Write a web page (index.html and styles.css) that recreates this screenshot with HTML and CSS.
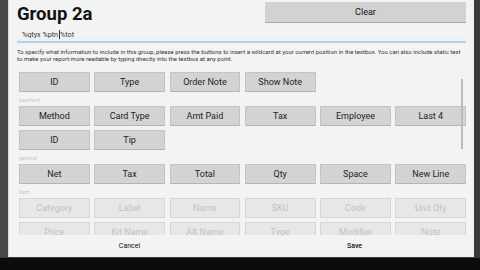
FILE: index.html
```html
<!DOCTYPE html>
<html>
<head>
<meta charset="utf-8">
<link rel="stylesheet" href="styles.css">
</head>
<body>
<div class="screen">
  <div class="dialog">
    <div class="header">
      <h1 class="title">Group 2a</h1>
      <button class="clear">Clear</button>
    </div>
    <div class="textbox"><span>%qtyx %ptn</span><span class="caret"></span><span>%tot</span></div>
    <p class="desc">To specify what information to include in this group, please press the buttons to insert a wildcard at your current position in the textbox. You can also include static text to make your report more readable by typing directly into the textbox at any point.</p>
    <div class="scroll">
      <div class="grid">
        <button class="btn">ID</button>
        <button class="btn">Type</button>
        <button class="btn">Order Note</button>
        <button class="btn">Show Note</button>
      </div>
      <div class="label">payment</div>
      <div class="grid">
        <button class="btn">Method</button>
        <button class="btn">Card Type</button>
        <button class="btn">Amt Paid</button>
        <button class="btn">Tax</button>
        <button class="btn">Employee</button>
        <button class="btn">Last 4</button>
        <button class="btn">ID</button>
        <button class="btn">Tip</button>
      </div>
      <div class="label">general</div>
      <div class="grid">
        <button class="btn">Net</button>
        <button class="btn">Tax</button>
        <button class="btn">Total</button>
        <button class="btn">Qty</button>
        <button class="btn">Space</button>
        <button class="btn">New Line</button>
      </div>
      <div class="label">item</div>
      <div class="grid">
        <button class="btn off">Category</button>
        <button class="btn off">Label</button>
        <button class="btn off">Name</button>
        <button class="btn off">SKU</button>
        <button class="btn off">Code</button>
        <button class="btn off">Unit Qty</button>
        <button class="btn off">Price</button>
        <button class="btn off">Kit Name</button>
        <button class="btn off">Alt Name</button>
        <button class="btn off">Type</button>
        <button class="btn off">Modifier</button>
        <button class="btn off">Note</button>
      </div>
      <div class="scrollbar"></div>
    </div>
    <div class="actions">
      <button class="action">Cancel</button>
      <button class="action save">Save</button>
    </div>
  </div>
  <div class="bottom"></div>
</div>
</body>
</html>
```

FILE: styles.css
```css
* { box-sizing: border-box; }
html, body { margin: 0; padding: 0; }
body {
  width: 480px;
  height: 270px;
  overflow: hidden;
  background: #101010;
  font-family: Roboto, "Liberation Sans", sans-serif;
}
.screen {
  width: 480px;
  height: 270px;
  display: flex;
  flex-direction: column;
}
.dialog {
  height: 257px;
  flex-shrink: 0;
  margin: 0 6px 0 8px;
  background: #f3f3f3;
  border-left: 1px solid #d8d8d8;
  box-shadow: -8px 0 0 #484848, 6px 0 0 #3a3a3a;
  padding: 0 7px 0 8px;
  display: flex;
  flex-direction: column;
}
.dialog > * { flex-shrink: 0; }
.bottom {
  flex: 1;
  background: #0c0c0c;
  border-top: 1px solid #3a3a3a;
}
.header {
  display: flex;
  justify-content: space-between;
  align-items: flex-start;
  height: 27px;
}
.title {
  margin: 3px 0 0 0;
  font-size: 18.5px;
  font-weight: 700;
  color: #111;
  line-height: 22px;
}
.clear {
  width: 201px;
  height: 21px;
  margin-top: 2px;
  margin-right: 1px;
  border: none;
  border-bottom: 1px solid #a8a8a8;
  background: #d2d2d2;
  font-family: inherit;
  font-size: 9px;
  color: #111;
  padding: 0;
}
.textbox {
  height: 16px;
  margin-right: 1px;
  padding: 3px 0 0 5px;
  font-size: 7.2px;
  color: #333;
  line-height: 9px;
  border-bottom: 2px solid #b4d3e2;
  background: linear-gradient(#f3f3f3 65%, #e6f0f5);
  display: flex;
  align-items: flex-start;
}
.caret {
  width: 1px;
  height: 9px;
  background: #333;
  margin: 0 0.5px;
}
.desc {
  margin: 6px 0 0 0;
  font-size: 6px;
  line-height: 6.5px;
  color: #333;
  height: 18px;
}
.scroll {
  position: relative;
  height: 168px;
  overflow: hidden;
  padding: 5px 0 0 2px;
  display: flex;
  flex-direction: column;
}
.scroll > * { flex-shrink: 0; }
.grid {
  display: grid;
  grid-template-columns: repeat(6, 70.7px);
  column-gap: 4.6px;
  row-gap: 4px;
}
.btn {
  height: 20px;
  border: 1px solid #c4c4c4;
  border-bottom-color: #b4b4b4;
  background: #d3d3d3;
  font-family: inherit;
  font-size: 9px;
  color: #1e1e1e;
  padding: 0;
  white-space: nowrap;
}
.btn.off {
  background: #e7e7e7;
  border-color: #d6d6d6;
  color: #c2c2c2;
}
.label {
  height: 14px;
  padding-top: 5px;
  font-size: 5.5px;
  line-height: 6px;
  color: #c8c8c8;
}
.scrollbar {
  position: absolute;
  left: 444px;
  top: 12px;
  width: 2px;
  height: 70px;
  background: #bcbcbc;
}
.actions {
  flex: 1;
  display: flex;
  align-items: center;
}
.action {
  flex: 1;
  border: none;
  background: transparent;
  font-family: inherit;
  font-size: 7px;
  color: #111;
  padding: 0 0 1px 0;
}
.save { font-weight: 500; }
```
